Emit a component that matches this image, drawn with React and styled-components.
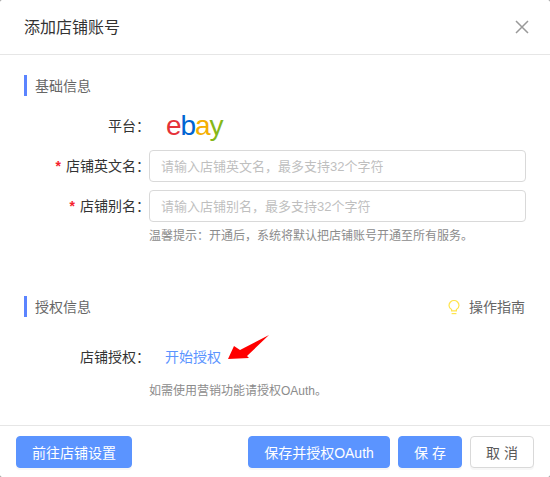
import React from "react";
import styled, { createGlobalStyle } from "styled-components";

const Global = createGlobalStyle`
  html, body { margin: 0; padding: 0; background: #8c8c8c; }
  * { box-sizing: border-box; }
  body { font-family: "Liberation Sans", "Noto Sans CJK SC", sans-serif; font-size: 14px; }
`;

const Dialog = styled.div`
  width: 550px; height: 477px; background: #fff; border-radius: 2px;
  display: flex; flex-direction: column;
`;
const Header = styled.header`
  height: 55px; border-bottom: 1px solid #e6e6e6; padding: 0 21px 0 24px;
  display: flex; align-items: center; justify-content: space-between;
`;
const Title = styled.h1`
  margin: 0; padding-top: 2px; font-size: 16px; font-weight: 400; color: #333; line-height: 22px;
`;
const Close = styled.svg`
  width: 14px; height: 14px; display: block; color: #999;
`;
const Body = styled.main`
  flex: 1; padding: 20px 24px 0; display: flex; flex-direction: column;
`;
const SectionHead = styled.div`
  height: 21px; display: flex; align-items: center; justify-content: space-between;
  margin-top: ${(p) => p.$top || 0}px;
`;
const SectionTitle = styled.h2`
  margin: 0; padding-left: 8px; height: 21px; border-left: 3px solid #5b84ff;
  font-size: 14px; font-weight: 400; line-height: 23px; color: #666;
`;
const Guide = styled.div`
  display: flex; align-items: center; gap: 9px; color: #666; font-size: 14px; line-height: 21px;
  padding: 2px 1px 0 0;
`;
const Bulb = styled.svg`
  width: 12px; height: 15px; display: block; color: #ffe44d;
`;
const Form = styled.div`
  display: flex; flex-direction: column; gap: 8px; margin: ${(p) => p.$top}px -24px 0 -24px;
`;
const Row = styled.div`
  display: flex; align-items: center; height: 32px; padding-right: 24px;
`;
const Label = styled.label`
  width: 150px; flex: none; text-align: right; color: #333; font-size: 14px; line-height: 20px;
`;
const Star = styled.span`
  color: #f5222d; font-family: "Liberation Sans", sans-serif; font-weight: 700; margin-right: 5px; font-size: 14px;
`;
const Input = styled.input`
  flex: 1; min-width: 0; height: 32px; border: 1px solid #d9d9d9; border-radius: 4px; margin-left: -1px;
  padding: 0 11px; font: inherit; font-size: 13px; color: #333; outline: none; background: #fff;
  &::placeholder { color: #bfbfbf; opacity: 1; }
`;
const Hint = styled.p`
  margin: ${(p) => p.$top}px 0 0 125px; font-size: 12px; line-height: 18px; color: #8c8c8c;
`;
const Logo = styled.div`
  margin-left: 16px; display: flex; font-family: "Liberation Sans", sans-serif;
  font-size: 28px; letter-spacing: -1.1px; line-height: 32px; height: 32px;
`;
const Letter = styled.span`
  color: ${(p) => p.$c};
`;
const LinkWrap = styled.div`
  position: relative; margin-left: 15px; line-height: 20px;
`;
const AuthLink = styled.a`
  color: #5b94ff; font-size: 14px; text-decoration: none;
`;
const Arrow = styled.svg`
  position: absolute; left: 62px; top: -13px; width: 44px; height: 28px;
`;
const Footer = styled.footer`
  height: 52px; border-top: 1px solid #e6e6e6; padding: 10px 16px 9px;
  display: flex; align-items: flex-start; justify-content: space-between;
`;
const Group = styled.div`
  display: flex; gap: 8px;
`;
const Button = styled.button`
  height: 32px; width: ${(p) => p.$w}px; padding: 0; border-radius: 4px; font: inherit; font-size: 14px;
  border: 1px solid ${(p) => (p.$ghost ? "#d9d9d9" : "#5b94ff")};
  background: ${(p) => (p.$ghost ? "#fff" : "#5b94ff")};
  color: ${(p) => (p.$ghost ? "#595959" : "#fff")};
  box-shadow: 0 2px 0 rgba(0, 0, 0, 0.03);
`;

export default function App() {
  return (
    <Dialog>
      <Global />
      <Header>
        <Title>添加店铺账号</Title>
        <Close viewBox="0 0 14 14" fill="none" stroke="currentColor" strokeWidth="1.5">
          <path d="M1 1 13 13M13 1 1 13" />
        </Close>
      </Header>
      <Body>
        <SectionHead><SectionTitle>基础信息</SectionTitle></SectionHead>
        <Form $top={14}>
          <Row>
            <Label>平台：</Label>
            <Logo>
              <Letter $c="#e53238">e</Letter>
              <Letter $c="#0064d2">b</Letter>
              <Letter $c="#f5af02">a</Letter>
              <Letter $c="#86b817">y</Letter>
            </Logo>
          </Row>
          <Row>
            <Label><Star>*</Star>店铺英文名：</Label>
            <Input placeholder="请输入店铺英文名，最多支持32个字符" />
          </Row>
          <Row>
            <Label><Star>*</Star>店铺别名：</Label>
            <Input placeholder="请输入店铺别名，最多支持32个字符" />
          </Row>
        </Form>
        <Hint $top={5}>温馨提示：开通后，系统将默认把店铺账号开通至所有服务。</Hint>
        <SectionHead $top={51}>
          <SectionTitle>授权信息</SectionTitle>
          <Guide>
            <Bulb viewBox="0 0 12 15" fill="none" stroke="currentColor" strokeWidth="1.2">
              <path d="M3.6 10.8V9.5C2 8.6 1 7.2 1 5.5a5 5 0 0 1 10 0c0 1.700-1 3.100-2.600 4v1.300z" />
              <path d="M3.6 13.600h4.800" />
            </Bulb>
            操作指南
          </Guide>
        </SectionHead>
        <Form $top={24}>
          <Row>
            <Label>店铺授权：</Label>
            <LinkWrap>
              <AuthLink href="#">开始授权</AuthLink>
              <Arrow viewBox="0 0 44 28">
                <path d="M1 25 7 12 13 16 42 1 20 22 22 24z" fill="#ff0000" />
              </Arrow>
            </LinkWrap>
          </Row>
        </Form>
        <Hint $top={9}>如需使用营销功能请授权OAuth。</Hint>
      </Body>
      <Footer>
        <Button $w={116}>前往店铺设置</Button>
        <Group>
          <Button $w={142}>保存并授权OAuth</Button>
          <Button $w={64}>保 存</Button>
          <Button $w={64} $ghost>取 消</Button>
        </Group>
      </Footer>
    </Dialog>
  );
}
